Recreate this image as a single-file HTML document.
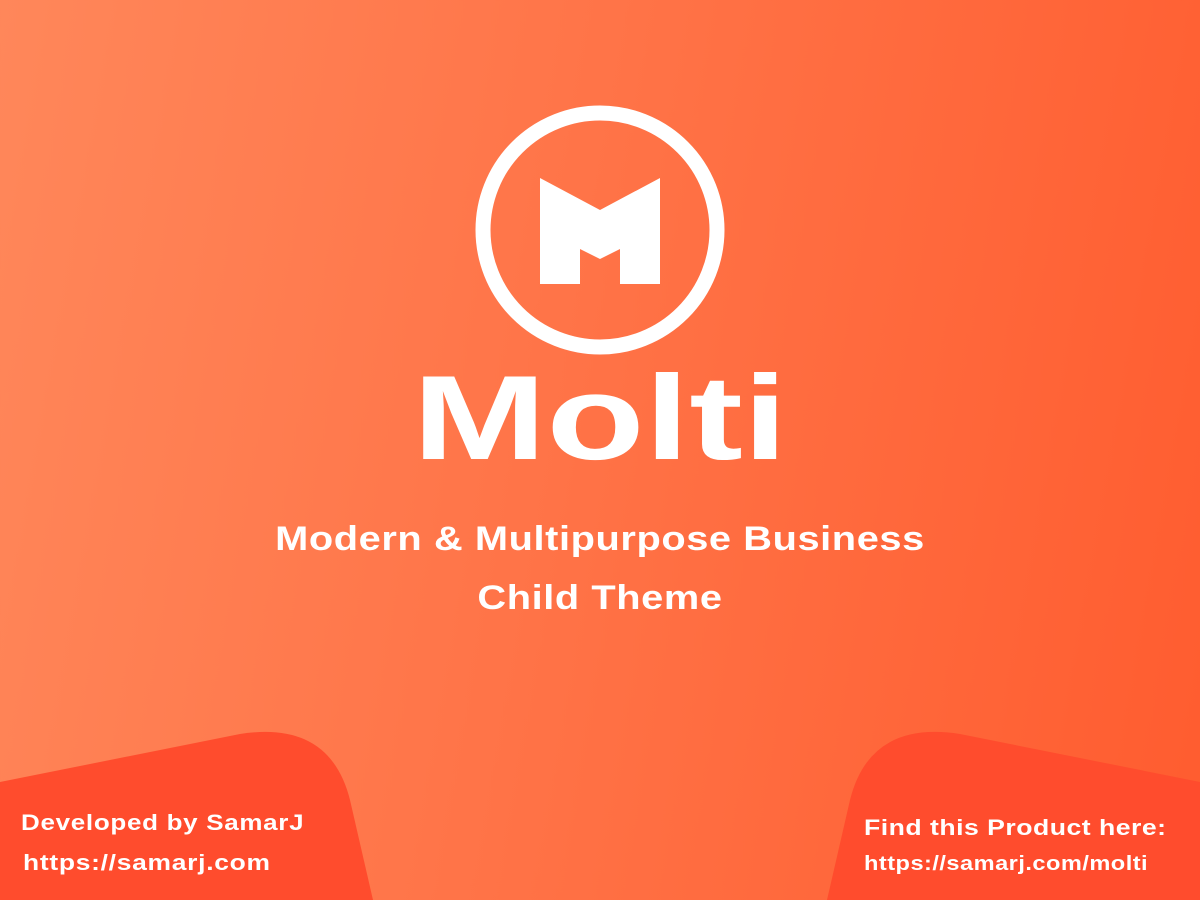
<!DOCTYPE html>
<html><head><meta charset="utf-8"><style>
html,body{margin:0;padding:0}
body{width:1200px;height:900px;overflow:hidden;position:relative;background:linear-gradient(100deg,#ff875a 0%,#ff7448 45%,#ff5c2f 100%);font-family:"Liberation Sans",sans-serif;color:#fff;font-weight:bold}
.t{position:absolute;white-space:nowrap;transform-origin:0 50%}
.c{transform-origin:50% 50%}
</style></head><body>
<svg width="1200" height="900" style="position:absolute;left:0;top:0">
<circle cx="600" cy="230" r="117" fill="none" stroke="#fff" stroke-width="15"/>
<path d="M540 178 L600 210 L660 178 L660 284 L620 284 L620 249 L600 259 L580 249 L580 284 L540 284 Z" fill="#fff"/>
<path d="M0 782 L240 734 Q330 720 350 800 L373 900 L0 900 Z" fill="#ff4c2d"/>
<path d="M1200 782 L960 734 Q870 720 850 800 L827 900 L1200 900 Z" fill="#ff4c2d"/>
</svg>
<div class="t c" style="left:0;width:1200px;text-align:center;top:358px;font-size:120px;line-height:120px;transform:scaleX(1.34)">Molti</div>
<div class="t c" style="left:0;width:1200px;text-align:center;top:516px;font-size:34px;line-height:46px;letter-spacing:0.5px;transform:scaleX(1.17)">Modern &amp; Multipurpose Business</div>
<div class="t c" style="left:0;width:1200px;text-align:center;top:575px;font-size:34px;line-height:46px;letter-spacing:0.5px;transform:scaleX(1.17)">Child Theme</div>
<div class="t" style="left:21px;top:810px;font-size:22px;letter-spacing:0.6px;transform:scaleX(1.18)">Developed by SamarJ</div>
<div class="t" style="left:23px;top:850px;font-size:22px;letter-spacing:0.6px;transform:scaleX(1.2)">https://samarj.com</div>
<div class="t" style="left:864px;top:815px;font-size:22px;letter-spacing:0.4px;transform:scaleX(1.21)">Find this Product here:</div>
<div class="t" style="left:864px;top:853px;font-size:20px;letter-spacing:0.4px;transform:scaleX(1.18)">https://samarj.com/molti</div>
</body></html>
